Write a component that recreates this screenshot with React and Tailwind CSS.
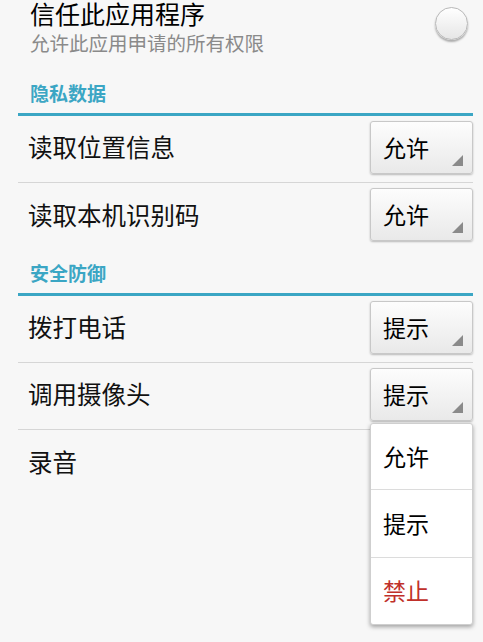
const font = { fontFamily: '"Noto Sans CJK SC", "Noto Sans", sans-serif' }

function Spinner({ value }) {
  return (
    <div className="relative w-[103px] h-[53px] rounded-[3px] border border-[#c8c8c8] bg-gradient-to-b from-[#fdfdfd] to-[#e9e9e9] shadow-[0_1px_2px_rgba(0,0,0,0.25)] flex items-center pl-[12px]">
      <span className="text-[23px] text-black leading-none">{value}</span>
      <svg className="absolute right-[9px] bottom-[7px]" width="11" height="11" viewBox="0 0 11 11">
        <polygon points="11,0 11,11 0,11" fill="#8a8a8a" />
      </svg>
    </div>
  )
}

function Row({ label, value, divider, children }) {
  return (
    <div className={`flex items-center justify-between h-[67px] pb-[4px] ${divider ? 'border-b border-[#d6d6d6]' : ''}`}>
      <span className="pl-[10px] text-[24.5px] leading-[34px] text-[#111]">{label}</span>
      {value && (
        <div className="relative">
          <Spinner value={value} />
          {children}
        </div>
      )}
    </div>
  )
}

function Header({ title, className }) {
  return (
    <div className={`flex items-end border-b-[3px] border-[#3ba6c4] ${className}`}>
      <span className="pl-[12px] pb-[6px] text-[19px] leading-[28px] font-bold text-[#3ba6c4]">{title}</span>
    </div>
  )
}

export default function App() {
  return (
    <div className="w-[483px] h-[642px] overflow-hidden bg-[#f7f7f7]" style={font}>
      <div className="flex items-start justify-between pl-[30px] pr-[15px] h-[64px]">
        <div>
          <div className="text-[25px] leading-[26px] text-black">信任此应用程序</div>
          <div className="mt-[3px] text-[19.5px] leading-[28px] text-[#8a8a8a]">允许此应用申请的所有权限</div>
        </div>
        <div className="mt-[7px] w-[33px] h-[33px] rounded-full border border-[#b8b8b8] bg-gradient-to-b from-white to-[#e6e6e6] shadow-[0_2px_2px_rgba(0,0,0,0.3)]" />
      </div>
      <div className="ml-[18px] mr-[10px]">
        <Header title="隐私数据" className="h-[52px]" />
        <Row label="读取位置信息" value="允许" divider />
        <Row label="读取本机识别码" value="允许" />
        <Header title="安全防御" className="h-[46px]" />
        <Row label="拨打电话" value="提示" divider />
        <Row label="调用摄像头" value="提示" divider>
          <div className="absolute right-0 top-[55px] w-[103px] bg-white border border-[#cfcfcf] rounded-[3px] shadow-[0_2px_4px_rgba(0,0,0,0.35)] z-10">
            <div className="h-[66px] flex items-center pl-[12px] text-[23px] text-black border-b border-[#dcdcdc]">允许</div>
            <div className="h-[68px] flex items-center pl-[12px] text-[23px] text-black border-b border-[#dcdcdc]">提示</div>
            <div className="h-[66px] flex items-center pl-[12px] text-[23px] text-[#c0302a]">禁止</div>
          </div>
        </Row>
        <Row label="录音" />
      </div>
    </div>
  )
}
